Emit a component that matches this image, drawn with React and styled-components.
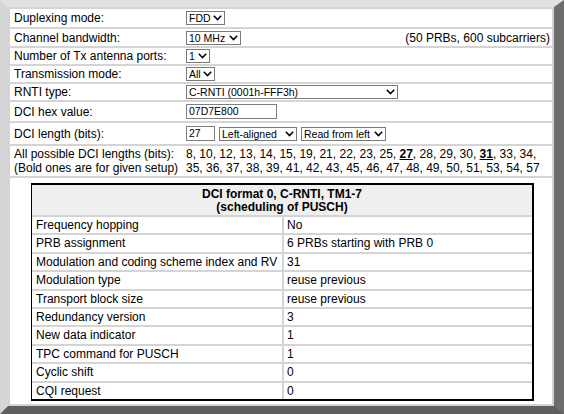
import React from "react";
import styled, { createGlobalStyle } from "styled-components";

const DCI_FIELDS = [
  ["Frequency hopping", "No"],
  ["PRB assignment", "6 PRBs starting with PRB 0"],
  ["Modulation and coding scheme index and RV", "31"],
  ["Modulation type", "reuse previous"],
  ["Transport block size", "reuse previous"],
  ["Redundancy version", "3"],
  ["New data indicator", "1"],
  ["TPC command for PUSCH", "1"],
  ["Cyclic shift", "0"],
  ["CQI request", "0"],
];

const Chevron = () => (
  <svg width="9" height="6" viewBox="0 0 9 6">
    <path d="M0.8 0.8 L4.5 4.6 L8.2 0.8" fill="none" stroke="#000" strokeWidth="1.5" />
  </svg>
);

const Select = ({ width, children }) => (
  <Dropdown $w={width}>
    <span>{children}</span>
    <Chevron />
  </Dropdown>
);

export default function App() {
  return (
    <>
      <GlobalStyle />
      <Frame>
        <Row $h={18}>
          <Label>Duplexing mode:</Label>
          <Value>
            <Select width={39}>FDD</Select>
          </Value>
        </Row>
        <Row $h={17}>
          <Label>Channel bandwidth:</Label>
          <Value>
            <Select width={55}>10 MHz</Select>
            <Note>(50 PRBs, 600 subcarriers)</Note>
          </Value>
        </Row>
        <Row $h={16}>
          <Label>Number of Tx antenna ports:</Label>
          <Value>
            <Select width={24}>1</Select>
          </Value>
        </Row>
        <Row $h={16}>
          <Label>Transmission mode:</Label>
          <Value>
            <Select width={29}>All</Select>
          </Value>
        </Row>
        <Row $h={16}>
          <Label>RNTI type:</Label>
          <Value>
            <Select width={212}>C-RNTI (0001h-FFF3h)</Select>
          </Value>
        </Row>
        <Row $h={19}>
          <Label>DCI hex value:</Label>
          <Value>
            <TextBox $w={91}>07D7E800</TextBox>
          </Value>
        </Row>
        <Row $h={21}>
          <Label>DCI length (bits):</Label>
          <Value>
            <TextBox $w={29}>27</TextBox>
            <Select width={78}>Left-aligned</Select>
            <Select width={85}>Read from left</Select>
          </Value>
        </Row>
        <Row $h={30}>
          <Label $multi>
            All possible DCI lengths (bits):
            <br />
            (Bold ones are for given setup)
          </Label>
          <Lengths>
            8, 10, 12, 13, 14, 15, 19, 21, 22, 23, 25, <Given>27</Given>, 28, 29,
            30, <Given>31</Given>, 33, 34,
            <br />
            35, 36, 37, 38, 39, 41, 42, 43, 45, 46, 47, 48, 49, 50, 51, 53, 54, 57
          </Lengths>
        </Row>
        <TableCell>
          <DciTable>
            <Heading>
              DCI format 0, C-RNTI, TM1-7
              <br />
              (scheduling of PUSCH)
            </Heading>
            {DCI_FIELDS.map(([name, value]) => (
              <React.Fragment key={name}>
                <Cell>{name}</Cell>
                <Cell $value>{value}</Cell>
              </React.Fragment>
            ))}
          </DciTable>
        </TableCell>
      </Frame>
    </>
  );
}

const GlobalStyle = createGlobalStyle`
  body {
    margin: 0;
    background: #ffffff;
    font-family: "Liberation Sans", Arial, sans-serif;
  }
`;

const Frame = styled.div`
  width: 564px;
  box-sizing: border-box;
  display: flex;
  flex-direction: column;
  gap: 2px;
  padding: 2px;
  border-style: solid;
  border-width: 7px 10px 8px 8px;
  border-color: #e1e1e1 #6d6d6d #5e5e5e #d6d6d6;
  background: #d4d4d4;
  font-size: 12px;
  color: #000;
`;

const Row = styled.div`
  display: grid;
  grid-template-columns: 176px 1fr;
  align-items: center;
  height: ${(p) => p.$h}px;
  background: #ffffff;
`;

const Label = styled.div`
  padding-left: 4px;
  line-height: ${(p) => (p.$multi ? "14.5px" : "16px")};
  white-space: nowrap;
`;

const Value = styled.div`
  display: flex;
  align-items: center;
  gap: 4px;
`;

const Note = styled.span`
  margin-left: auto;
  padding-right: 2px;
  line-height: 16px;
`;

const Dropdown = styled.div`
  display: flex;
  align-items: center;
  justify-content: space-between;
  box-sizing: border-box;
  width: ${(p) => p.$w}px;
  height: 14px;
  padding: 0 2px;
  border: 1px solid #7a7a7a;
  background: #ffffff;
  font-size: 10.5px;
  line-height: 12px;
  white-space: nowrap;
`;

const TextBox = styled.div`
  box-sizing: border-box;
  width: ${(p) => p.$w}px;
  height: 15px;
  padding: 0 2px;
  border: 1px solid #7f7f7f;
  background: #ffffff;
  font-size: 10.5px;
  line-height: 13px;
`;

const Lengths = styled.div`
  line-height: 14.5px;
  white-space: nowrap;
`;

const Given = styled.b`
  text-decoration: underline;
`;

const TableCell = styled.div`
  background: #ffffff;
  padding: 5px 0 3px 21px;
`;

const DciTable = styled.div`
  display: grid;
  grid-template-columns: 250px 248px;
  gap: 2px;
  width: 503px;
  box-sizing: border-box;
  border-style: solid;
  border-color: #000;
  border-width: 2px 2px 2px 1px;
  background: #d4d4d4;
`;

const Heading = styled.div`
  grid-column: 1 / -1;
  height: 30px;
  box-sizing: border-box;
  padding-top: 3px;
  background: #efefef;
  font-weight: bold;
  text-align: center;
  line-height: 13px;
`;

const Cell = styled.div`
  height: 16.4px;
  line-height: 17px;
  padding-left: ${(p) => (p.$value ? "3px" : "4px")};
  background: #ffffff;
  white-space: nowrap;
`;
